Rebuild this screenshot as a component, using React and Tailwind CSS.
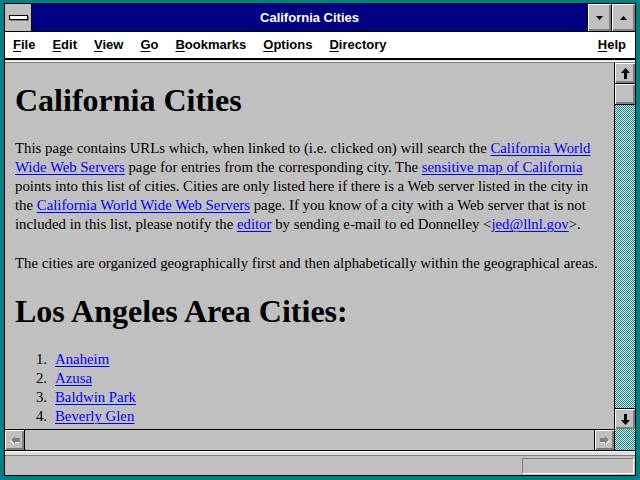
const serif = "font-['Liberation_Serif','Times_New_Roman',serif]";
const sans = "font-['Liberation_Sans',Arial,sans-serif]";
const bevel =
  "bg-[#c0c0c0] shadow-[inset_1px_1px_0_#ffffff,inset_-1px_-1px_0_#808080,inset_-2px_-2px_0_#808080]";

function Link({ children }) {
  return <a className="text-[#0000ff] underline underline-offset-[2px] decoration-1">{children}</a>;
}

function MenuItem({ label, className = "" }) {
  return (
    <span className={className}>
      <u className="underline-offset-[2px] decoration-1">{label[0]}</u>
      {label.slice(1)}
    </span>
  );
}

function Tri({ up }) {
  return (
    <svg width="7" height="4" viewBox="0 0 7 4">
      <path d={up ? "M3.5 0L7 4H0Z" : "M0 0H7L3.5 4Z"} fill="#000" />
    </svg>
  );
}

function BigArrow({ down }) {
  return (
    <svg width="9" height="11" viewBox="0 0 9 11" className={down ? "rotate-180" : ""}>
      <path d="M4.5 0L9 5H6V11H3V5H0Z" fill="#000" />
    </svg>
  );
}

function GreyArrow({ right }) {
  return (
    <svg width="10" height="9" viewBox="0 0 10 9" className={right ? "" : "-scale-x-100"}>
      <path d="M6 1L10 5L6 9V7H1V3H6Z" fill="#ffffff" />
      <path d="M5 0L9 4L5 8V6H0V2H5Z" fill="#808080" />
    </svg>
  );
}

// 1px teal/white dither of the scrollbar track
function Dither({ id }) {
  return (
    <svg className="block w-full h-full" shapeRendering="crispEdges">
      <defs>
        <pattern id={id} width="2" height="2" patternUnits="userSpaceOnUse">
          <rect width="2" height="2" fill="#ffffff" />
          <rect width="1" height="1" fill="#008080" />
          <rect x="1" y="1" width="1" height="1" fill="#008080" />
        </pattern>
      </defs>
      <rect width="100%" height="100%" fill={`url(#${id})`} />
    </svg>
  );
}

const cities = ["Anaheim", "Azusa", "Baldwin Park", "Beverly Glen", "Beverly Hills"];

export default function App() {
  return (
    <div className="w-[640px] h-[480px] bg-[#008080] pt-[3px] px-[4px] pb-[4px]">
      <div className="h-full border border-black flex flex-col bg-[#c0c0c0]">
        {/* title bar */}
        <div className="h-[28px] shrink-0 flex border-b border-black">
          <div className="w-[27px] border-r border-black flex items-center justify-center">
            <div className="w-[19px] h-[5px] bg-white border border-black shadow-[1px_1px_0_#808080]" />
          </div>
          <div className={`flex-1 bg-[#000080] text-white font-bold text-[13px] flex items-center justify-center ${sans}`}>
            California Cities
          </div>
          <div className={`w-[24px] border-l border-black flex items-center justify-center ${bevel}`}>
            <Tri />
          </div>
          <div className={`w-[24px] border-l border-black flex items-center justify-center ${bevel}`}>
            <Tri up />
          </div>
        </div>

        {/* menu bar */}
        <div className={`h-[28px] shrink-0 bg-white border-b-2 border-black flex items-center gap-[17px] pl-[8px] pr-[9px] text-[13px] font-bold text-black ${sans}`}>
          <MenuItem label="File" />
          <MenuItem label="Edit" />
          <MenuItem label="View" />
          <MenuItem label="Go" />
          <MenuItem label="Bookmarks" />
          <MenuItem label="Options" />
          <MenuItem label="Directory" />
          <MenuItem label="Help" className="ml-auto" />
        </div>

        {/* separator */}
        <div className="h-[3px] shrink-0 bg-white border-t border-[#dfdfdf] border-b border-b-[#808080]" />

        {/* page + scrollbars */}
        <div className="flex-1 min-h-0 grid grid-cols-[1fr_21px] grid-rows-[1fr_21px] border-b border-black">
          <div className={`min-h-0 overflow-hidden pt-[19px] pl-[10px] text-black ${serif}`}>
            <h1 className="text-[32px] leading-[37px] font-bold whitespace-nowrap">California Cities</h1>
            <p className="mt-[20px] text-[14.8px] leading-[19px] whitespace-nowrap">
              This page contains URLs which, when linked to (i.e. clicked on) will search the{" "}
              <Link>California World<br />Wide Web Servers</Link> page for entries from the corresponding city. The{" "}
              <Link>sensitive map of California</Link>
              <br />
              points into this list of cities. Cities are only listed here if there is a Web server listed in the city in
              <br />
              the <Link>California World Wide Web Servers</Link> page. If you know of a city with a Web server that is not
              <br />
              included in this list, please notify the <Link>editor</Link> by sending e-mail to ed Donnelley &lt;
              <Link>jed@llnl.gov</Link>&gt;.
            </p>
            <p className="mt-[20px] text-[14.8px] leading-[19px] whitespace-nowrap">
              The cities are organized geographically first and then alphabetically within the geographical areas.
            </p>
            <h2 className="mt-[20px] text-[32px] leading-[37px] font-bold whitespace-nowrap">Los Angeles Area Cities:</h2>
            <ol className="mt-[20px] text-[14.8px] leading-[19px]">
              {cities.map((c, i) => (
                <li key={c} className="flex gap-[8px]">
                  <span className="w-[32px] text-right">{i + 1}.</span>
                  <Link>{c}</Link>
                </li>
              ))}
            </ol>
          </div>

          {/* vertical scrollbar */}
          <div className="min-h-0 border-l border-black flex flex-col">
            <div className={`h-[21px] shrink-0 border-b border-black flex items-center justify-center ${bevel}`}>
              <BigArrow />
            </div>
            <div className={`h-[21px] shrink-0 border-b border-black ${bevel}`} />
            <div className="flex-1 min-h-0">
              <Dither id="vtrack" />
            </div>
            <div className={`h-[21px] shrink-0 border-t border-black flex items-center justify-center ${bevel}`}>
              <BigArrow down />
            </div>
          </div>

          {/* horizontal scrollbar */}
          <div className="border-t border-black flex">
            <div className={`w-[20px] border-r border-black flex items-center justify-center ${bevel}`}>
              <GreyArrow />
            </div>
            <div className="flex-1" />
            <div className={`w-[20px] border-l border-black flex items-center justify-center ${bevel}`}>
              <GreyArrow right />
            </div>
          </div>
          <div className="border-l border-black">
            <Dither id="corner" />
          </div>
        </div>

        {/* status bar */}
        <div className="h-[5px] shrink-0 bg-[#dfdfdf] border-t border-white border-b border-b-[#808080]" />
        <div className="h-[19px] shrink-0 flex items-center justify-end pr-[1px]">
          <div className="w-[112px] h-[16px] border-t border-l border-[#808080] border-b border-r border-b-white border-r-white" />
        </div>
      </div>
    </div>
  );
}
